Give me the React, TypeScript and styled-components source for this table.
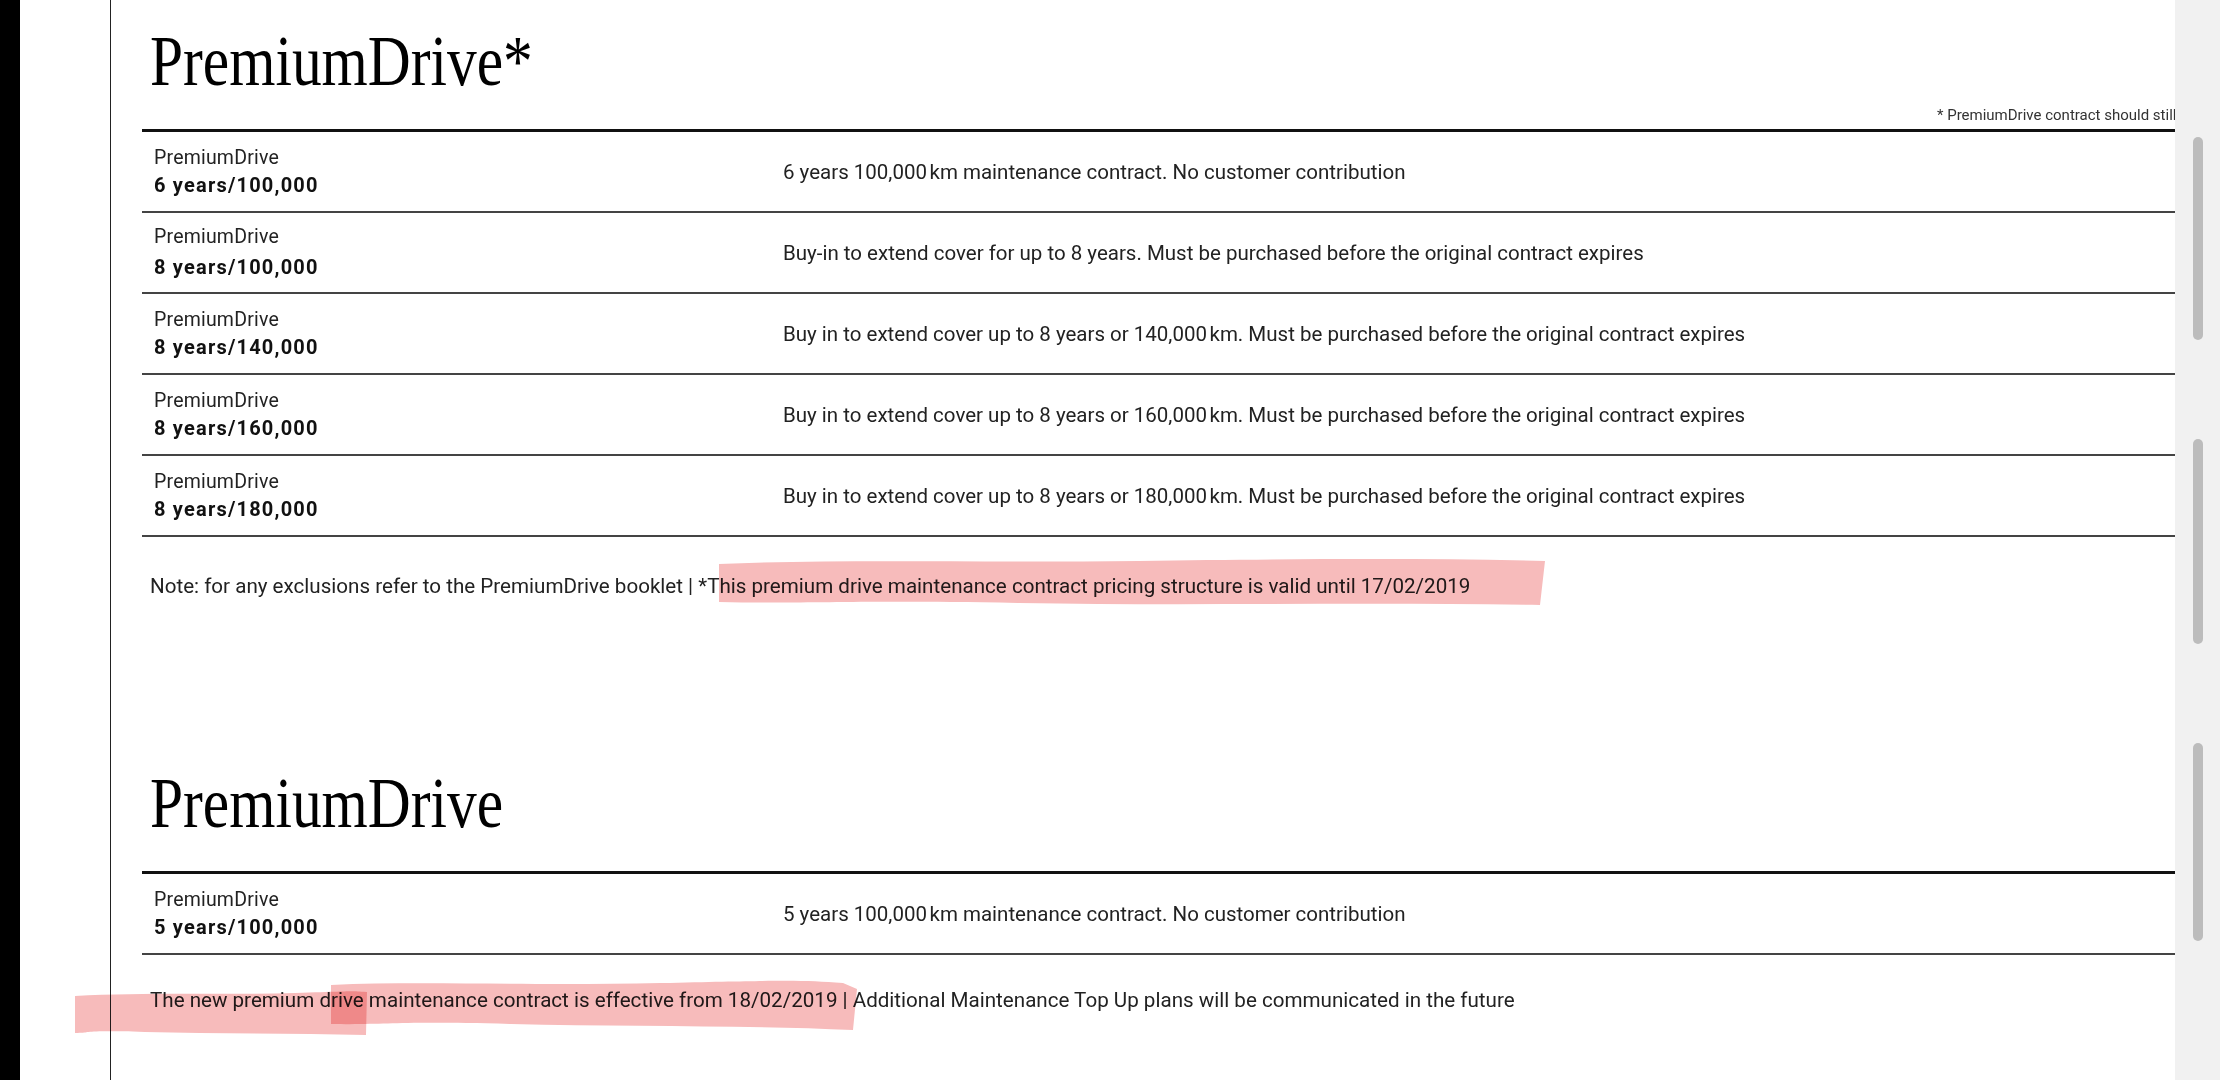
import React from "react";
import styled, { createGlobalStyle } from "styled-components";

const GlobalStyle = createGlobalStyle`
  html, body {
    margin: 0;
    padding: 0;
    background: #fff;
  }
  body {
    font-family: Roboto, "Liberation Sans", sans-serif;
    color: #222;
  }
  * {
    box-sizing: border-box;
  }
`;

type Plan = {
  term: string;
  text: string;
  loose?: boolean;
};

const buyIn = (km: string) =>
  `Buy in to extend cover up to 8 years or ${km}\u202Fkm. Must be purchased before the original contract expires`;

const currentPlans: Plan[] = [
  {
    term: "6 years/100,000",
    text: "6 years 100,000\u202Fkm maintenance contract. No customer contribution",
  },
  {
    term: "8 years/100,000",
    text: "Buy-in to extend cover for up to 8 years. Must be purchased before the original contract expires",
    loose: true,
  },
  { term: "8 years/140,000", text: buyIn("140,000") },
  { term: "8 years/160,000", text: buyIn("160,000") },
  { term: "8 years/180,000", text: buyIn("180,000") },
];

const newPlans: Plan[] = [
  {
    term: "5 years/100,000",
    text: "5 years 100,000\u202Fkm maintenance contract. No customer contribution",
  },
];

type Stroke = { x: number; y: number; w: number; h: number; d: string };

// marker pen strokes someone drew over the notes
const firstNoteStrokes: Stroke[] = [
  {
    x: 577,
    y: -15,
    w: 826,
    h: 50,
    d: "M0,7 C120,2 260,6 420,4 S700,1 826,4 L821,48 C640,45 470,49 300,46 S90,47 0,45 Z",
  },
];

const secondNoteStrokes: Stroke[] = [
  {
    x: -67,
    y: 3,
    w: 292,
    h: 47,
    d: "M0,7 C70,3 150,6 220,4 S270,2 292,3 L291,46 C220,44 140,45 70,43 S20,44 0,44 Z",
  },
  {
    x: 189,
    y: -6,
    w: 526,
    h: 51,
    d: "M0,5 C90,1 200,6 330,3 S470,0 512,3 L526,9 L522,50 C420,45 300,47 180,44 S60,45 0,44 Z",
  },
];

export default function App() {
  return (
    <>
      <GlobalStyle />
      <Screen>
        <Bezel />
        <Gutter />
        <Page>
          <Section>
            <Header>
              <Title>PremiumDrive*</Title>
              <FinePrint>
                * PremiumDrive contract should still be honoured until the end
                of the agreement
              </FinePrint>
            </Header>
            <PlanTable plans={currentPlans} />
            <Note>
              Note: for any exclusions refer to the PremiumDrive booklet |
              *This premium drive maintenance contract pricing structure is
              valid until 17/02/2019
              {firstNoteStrokes.map((s, i) => (
                <Marker key={i} stroke={s} />
              ))}
            </Note>
          </Section>

          <Section $gap={167}>
            <Header>
              <Title>PremiumDrive</Title>
            </Header>
            <PlanTable plans={newPlans} />
            <Note $gap={31}>
              The new premium drive maintenance contract is effective from
              18/02/2019 | Additional Maintenance Top Up plans will be
              communicated in the future
              {secondNoteStrokes.map((s, i) => (
                <Marker key={i} stroke={s} />
              ))}
            </Note>
          </Section>
        </Page>
        <Rail>
          <Thumb $h={203} />
          <Thumb $h={205} />
          <Thumb $h={198} />
        </Rail>
      </Screen>
    </>
  );
}

function PlanTable({ plans }: { plans: Plan[] }) {
  return (
    <Table>
      {plans.map((p) => (
        <Row key={p.term}>
          <LabelCell>
            <Name>PremiumDrive</Name>
            <Term $loose={p.loose}>{p.term}</Term>
          </LabelCell>
          <Description>{p.text}</Description>
        </Row>
      ))}
    </Table>
  );
}

function Marker({ stroke }: { stroke: Stroke }) {
  return (
    <MarkerSvg
      $x={stroke.x}
      $y={stroke.y}
      width={stroke.w}
      height={stroke.h}
      viewBox={`0 0 ${stroke.w} ${stroke.h}`}
    >
      <path d={stroke.d} fill="#f7bbbb" />
    </MarkerSvg>
  );
}

const Screen = styled.div`
  display: flex;
  width: 2220px;
  height: 1080px;
  overflow: hidden;
  background: #fff;
`;

const Bezel = styled.div`
  flex: none;
  width: 20px;
  background: #000;
`;

const Gutter = styled.div`
  flex: none;
  width: 91px;
  border-right: 1px solid #222;
`;

const Page = styled.main`
  flex: 1;
  min-width: 0;
  padding: 25px 0 0 31px;
`;

const Section = styled.section<{ $gap?: number }>`
  display: flex;
  flex-direction: column;
  margin-top: ${(p) => p.$gap ?? 0}px;
`;

const Header = styled.header`
  display: flex;
  flex-direction: column;
  justify-content: space-between;
  height: 104px;
`;

const Title = styled.h1`
  align-self: flex-start;
  margin: 0 0 0 8px;
  font-family: "Liberation Serif", "Times New Roman", serif;
  font-weight: 400;
  font-size: 72px;
  line-height: 72px;
  color: #000;
  transform: scaleX(0.825);
  transform-origin: left center;
`;

const FinePrint = styled.div`
  align-self: flex-end;
  width: 238px;
  margin-bottom: 4px;
  overflow: hidden;
  white-space: nowrap;
  font-size: 15px;
  line-height: 20px;
  color: #333;
`;

const Table = styled.div`
  border-top: 3px solid #111;
`;

const Row = styled.div`
  display: grid;
  grid-template-columns: 641px 1fr;
  align-items: center;
  height: 81px;
  border-bottom: 2px solid #444;
`;

const LabelCell = styled.div`
  display: flex;
  flex-direction: column;
  padding: 3px 0 0 12px;
`;

const Name = styled.span`
  font-size: 19.5px;
  line-height: 24px;
  letter-spacing: 0.2px;
  color: #222;
`;

const Term = styled.span<{ $loose?: boolean }>`
  margin-top: ${(p) => (p.$loose ? 3 : 0)}px;
  font-size: 20px;
  line-height: 31px;
  font-weight: 700;
  letter-spacing: 1.2px;
  color: #111;
`;

const Description = styled.span`
  font-size: 20.5px;
  line-height: 28px;
  color: #222;
`;

const Note = styled.p<{ $gap?: number }>`
  position: relative;
  margin: ${(p) => p.$gap ?? 35}px 0 0;
  padding-left: 8px;
  font-size: 20.6px;
  line-height: 28px;
  color: #222;
  white-space: nowrap;
`;

const MarkerSvg = styled.svg<{ $x: number; $y: number }>`
  position: absolute;
  left: ${(p) => p.$x}px;
  top: ${(p) => p.$y}px;
  mix-blend-mode: multiply;
  pointer-events: none;
`;

const Rail = styled.div`
  flex: none;
  display: flex;
  flex-direction: column;
  align-items: center;
  gap: 99px;
  width: 45px;
  padding-top: 137px;
  background: #f1f1f1;
`;

const Thumb = styled.div<{ $h: number }>`
  width: 10px;
  height: ${(p) => p.$h}px;
  border-radius: 5px;
  background: #bcbcbc;
`;
